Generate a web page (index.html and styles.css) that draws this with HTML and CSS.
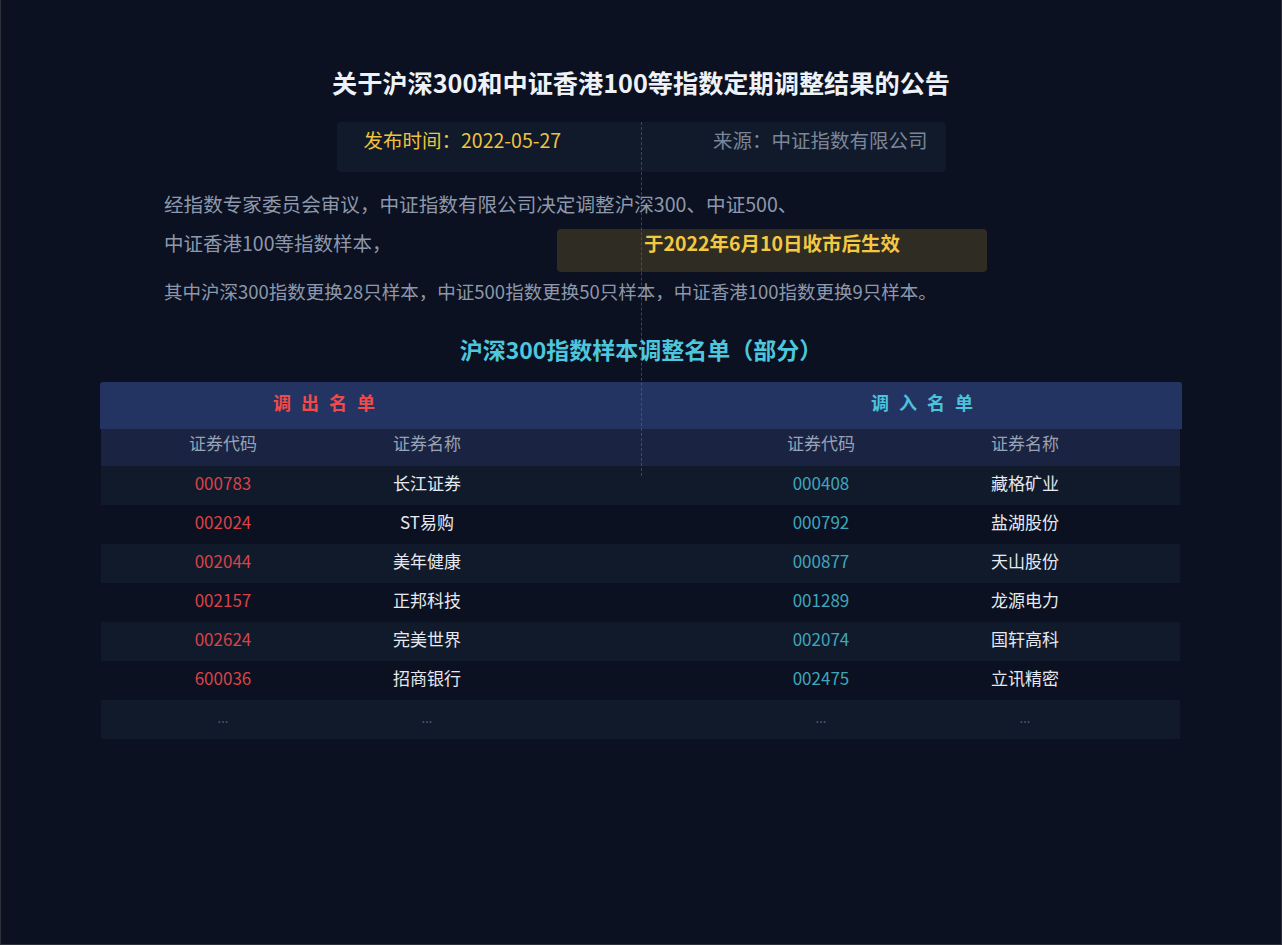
FILE: index.html
```html
<!DOCTYPE html>
<html lang="zh-CN">
<head>
<meta charset="utf-8">
<title>关于沪深300和中证香港100等指数定期调整结果的公告</title>
<link rel="stylesheet" href="styles.css">
</head>
<body>
<main class="page">
  <h1 class="title">关于沪深300和中证香港100等指数定期调整结果的公告</h1>
  <div class="meta">
    <span class="meta-date">发布时间：2022-05-27</span>
    <span class="meta-src">来源：中证指数有限公司</span>
  </div>
  <div class="intro">
    <p class="line line-1">经指数专家委员会审议，中证指数有限公司决定调整沪深300、中证500、</p>
    <div class="line-row">
      <span class="line line-2">中证香港100等指数样本，</span>
      <span class="effective">于2022年6月10日收市后生效</span>
    </div>
    <p class="line line-3">其中沪深300指数更换28只样本，中证500指数更换50只样本，中证香港100指数更换9只样本。</p>
  </div>
  <h2 class="subtitle">沪深300指数样本调整名单（部分）</h2>
  <div class="table">
    <div class="thead">
      <div class="group out"><span class="spaced">调出名单</span></div>
      <div class="group in"><span class="spaced">调入名单</span></div>
    </div>
    <div class="row sub">
      <span>证券代码</span><span>证券名称</span><span>证券代码</span><span>证券名称</span>
    </div>
    <div class="row odd">
      <span class="code-out">000783</span><span class="name">长江证券</span><span class="code-in">000408</span><span class="name">藏格矿业</span>
    </div>
    <div class="row">
      <span class="code-out">002024</span><span class="name">ST易购</span><span class="code-in">000792</span><span class="name">盐湖股份</span>
    </div>
    <div class="row odd">
      <span class="code-out">002044</span><span class="name">美年健康</span><span class="code-in">000877</span><span class="name">天山股份</span>
    </div>
    <div class="row">
      <span class="code-out">002157</span><span class="name">正邦科技</span><span class="code-in">001289</span><span class="name">龙源电力</span>
    </div>
    <div class="row odd">
      <span class="code-out">002624</span><span class="name">完美世界</span><span class="code-in">002074</span><span class="name">国轩高科</span>
    </div>
    <div class="row">
      <span class="code-out">600036</span><span class="name">招商银行</span><span class="code-in">002475</span><span class="name">立讯精密</span>
    </div>
    <div class="row odd more">
      <span>...</span><span>...</span><span>...</span><span>...</span>
    </div>
  </div>
  <div class="guide"></div>
</main>
</body>
</html>
```
FILE: styles.css
```css
* { box-sizing: border-box; }

html, body {
  margin: 0;
  padding: 0;
}

body {
  height: 945px;
  background: #0b1120;
  border: 1px solid #2b303b;
  border-top: 0;
  font-family: "Noto Sans CJK SC", "Noto Sans", sans-serif;
  color: #e6e9ef;
}

.page {
  position: relative;
  width: 100%;
  padding-top: 64px;
}

.title {
  margin: 0;
  text-align: center;
  font-size: 25.2px;
  line-height: 36px;
  font-weight: 700;
  color: #eef2f7;
}

.meta {
  width: 609px;
  height: 50px;
  margin: 22px auto 0;
  padding: 0 18px 14px 27px;
  background: #111a2b;
  border-radius: 4px;
  display: flex;
  justify-content: space-between;
  align-items: center;
  font-size: 19.5px;
  line-height: 24px;
}

.meta-date { color: #efc33d; }
.meta-src { color: #7b8698; }

.intro {
  width: 954px;
  margin: 12px auto 0;
  color: #8d98ac;
}

.line {
  margin: 0;
  line-height: 39px;
  white-space: nowrap;
}

.line-1 { font-size: 19.6px; }
.line-2 { font-size: 19.5px; }
.line-3 { font-size: 18.5px; }

.line-row {
  display: grid;
  grid-template-columns: 393px 430px;
  align-items: start;
}

.effective {
  margin-top: 6px;
  height: 43px;
  padding: 0 0 15px;
  line-height: 28px;
  background: #2f2c23;
  border-radius: 4px;
  text-align: center;
  font-size: 19.5px;
  font-weight: 700;
  color: #f3c842;
}

.subtitle {
  margin: 22px 0 0;
  text-align: center;
  font-size: 23px;
  line-height: 32px;
  font-weight: 700;
  color: #4ec6dd;
}

.table {
  width: 1082px;
  margin: 17px auto 0;
}

.thead,
.row {
  display: grid;
  grid-template-columns: 20px 204px 204px 190px 204px 204px 1fr;
  align-items: center;
}

.thead {
  height: 47px;
  padding-bottom: 7px;
  background: #233462;
  border-radius: 3px 3px 0 0;
  font-size: 18px;
  font-weight: 700;
}

.group { text-align: center; }
.group.out { grid-column: 2 / span 2; color: #f04a4a; }
.group.in { grid-column: 5 / span 2; color: #4cc3dc; }

.spaced {
  letter-spacing: 10px;
  margin-right: -10px;
}

.row {
  height: 39px;
  margin: 0 2px 0 1px;
  padding-bottom: 6px;
  font-size: 17px;
  line-height: 24px;
  text-align: center;
}

.row > :nth-child(1) { grid-column: 2; }
.row > :nth-child(2) { grid-column: 3; }
.row > :nth-child(3) { grid-column: 5; }
.row > :nth-child(4) { grid-column: 6; }

.row.sub {
  height: 37px;
  padding-bottom: 10px;
  background: #1a2342;
  color: #98a2b5;
}

.row.odd { background: #111a2b; }

.code-out { color: #d8434a; }
.code-in { color: #3fa5bc; }
.name { color: #e6e9ef; }

.row.more {
  font-size: 13px;
  color: #56627a;
  padding-bottom: 4px;
}

.guide {
  position: absolute;
  left: 640px;
  top: 122px;
  height: 354px;
  border-left: 1px dashed rgba(90, 104, 130, 0.6);
}
```
